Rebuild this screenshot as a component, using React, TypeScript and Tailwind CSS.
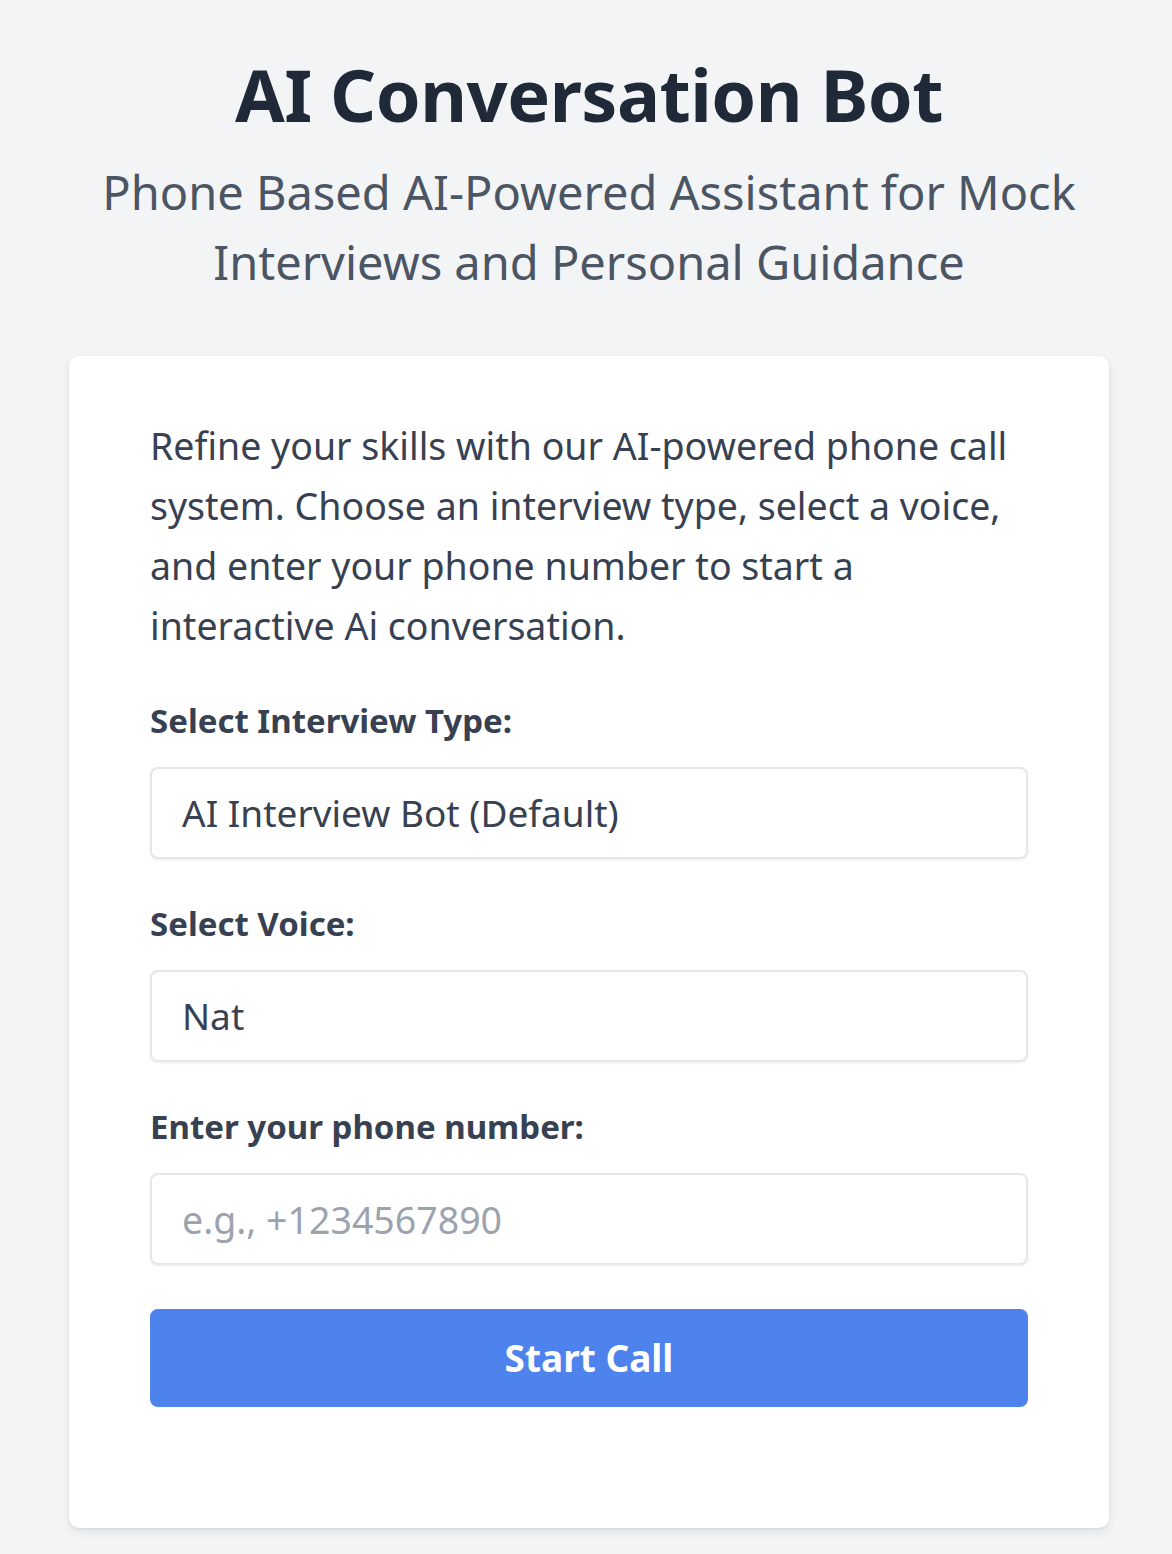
import React from "react";

export default function App() {
  return (
    <div className="min-h-[1554px] bg-[#f3f4f6] pl-[69px] pr-[63px] pt-[47px] pb-[26px]" style={{ fontFamily: '"Noto Sans", "Open Sans", sans-serif' }}>
      <div className="text-center">
        <h1 className="text-[72px] font-bold leading-[94px] tracking-[-0.5px] text-[#1f2937]">AI Conversation Bot</h1>
        <p className="mt-[16px] text-[47px] leading-[70px] text-[#4b5563]">
          Phone Based AI-Powered Assistant for Mock
          <br />
          Interviews and Personal Guidance
        </p>
      </div>
      <div className="mt-[59px] rounded-[10px] bg-white px-[81px] pt-[60px] pb-[121px] shadow-[0_4px_10px_rgba(0,0,0,0.08),0_1px_3px_rgba(0,0,0,0.06)]">
        <p className="text-[37.5px] leading-[60px] text-[#374151]">
          Refine your skills with our AI-powered phone call
          <br />
          system. Choose an interview type, select a voice,
          <br />
          and enter your phone number to start a
          <br />
          interactive Ai conversation.
        </p>
        <div className="mt-[41px]">
          <label className="block text-[33px] font-bold leading-[48px] text-[#374151]">Select Interview Type:</label>
          <div className="mt-[22px] flex h-[92px] items-center rounded-[8px] border-2 border-[#e5e7eb] bg-white pl-[30px] text-[37px] text-[#374151] shadow-[0_1px_3px_rgba(0,0,0,0.08)]">
            AI Interview Bot (Default)
          </div>
        </div>
        <div className="mt-[41px]">
          <label className="block text-[33px] font-bold leading-[48px] text-[#374151]">Select Voice:</label>
          <div className="mt-[22px] flex h-[92px] items-center rounded-[8px] border-2 border-[#e5e7eb] bg-white pl-[30px] text-[37px] text-[#374151] shadow-[0_1px_3px_rgba(0,0,0,0.08)]">
            Nat
          </div>
        </div>
        <div className="mt-[41px]">
          <label className="block text-[33px] font-bold leading-[48px] text-[#374151]">Enter your phone number:</label>
          <input
            placeholder="e.g., +1234567890"
            className="mt-[22px] block h-[92px] w-full rounded-[8px] border-2 border-[#e5e7eb] bg-white pl-[30px] text-[37.5px] text-[#374151] shadow-[0_1px_3px_rgba(0,0,0,0.08)] outline-none placeholder:text-[#9ca3af]"
          />
        </div>
        <button className="mt-[44px] flex h-[98px] w-full items-center justify-center rounded-[8px] bg-[#4e82ec] text-[37px] font-bold text-white">
          Start Call
        </button>
      </div>
    </div>
  );
}
